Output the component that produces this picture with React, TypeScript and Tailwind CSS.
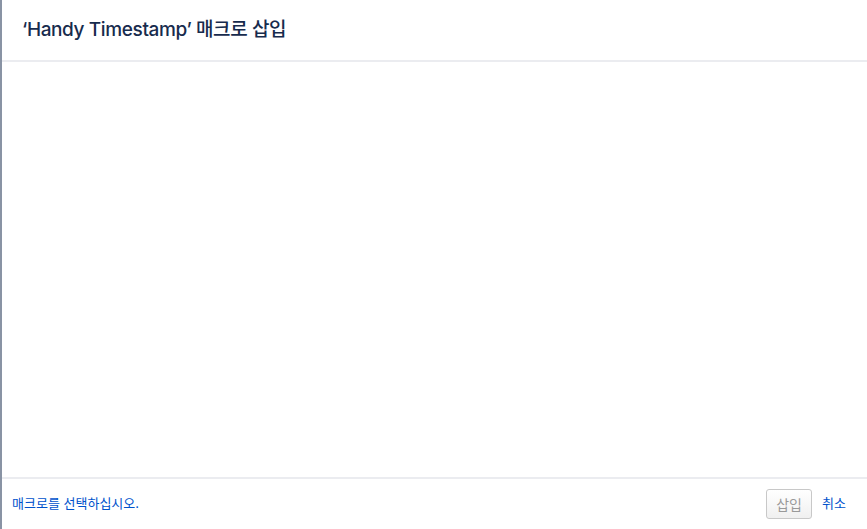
export default function App() {
  return (
    <div
      className="w-[867px] h-[529px] flex flex-col bg-white border-l-2 border-[#8993a4] overflow-hidden"
      style={{ fontFamily: 'Inter, "Noto Sans CJK KR", sans-serif' }}
    >
      <div className="h-[62px] flex items-center pl-[20px] border-b-2 border-[#ebecf0] shrink-0">
        <h2 className="text-[19px] font-medium text-[#172b4d] tracking-[-0.02em] pt-[1px]">
          ‘Handy Timestamp’ 매크로 삽입
        </h2>
      </div>
      <div className="flex-1"></div>
      <div className="h-[52px] flex items-center justify-between pl-[10px] pr-[21px] border-t-2 border-[#ebecf0] shrink-0">
        <span className="text-[13px] text-[#0052cc]">매크로를 선택하십시오.</span>
        <div className="flex items-center gap-[10px]">
          <button
            disabled
            className="h-[30px] w-[46px] rounded-[3px] border border-[#c8c8c8] bg-gradient-to-b from-white to-[#f0f0f0] text-[14px] text-[#999]"
          >
            삽입
          </button>
          <button className="text-[13px] text-[#0052cc]">취소</button>
        </div>
      </div>
    </div>
  );
}
